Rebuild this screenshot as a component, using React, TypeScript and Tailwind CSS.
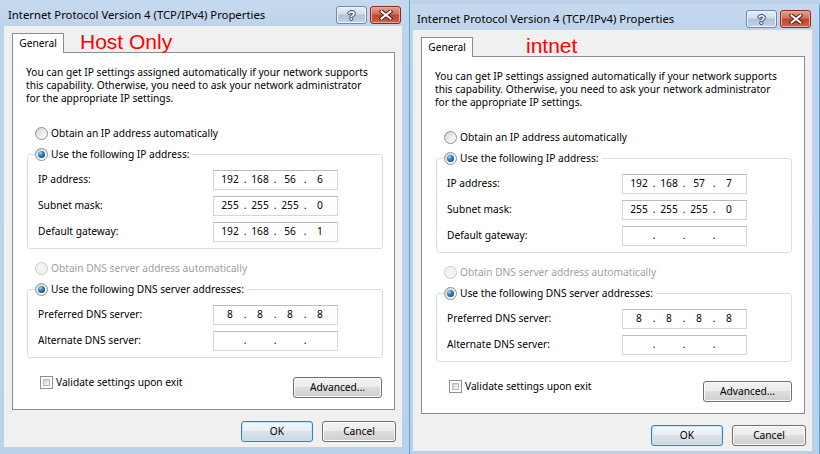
import React from "react";

type DlgProps = {
  frameLeft: "l4" | "l3";
  label: string;
  labelLeft: "host" | "int";
  ip: string[];
  mask: string[];
  gw: string[];
  dns1: string[];
  dns2: string[];
};

function Radio({ checked = false, disabled = false }: { checked?: boolean; disabled?: boolean }) {
  return (
    <span
      className={
        disabled
          ? "flex items-center justify-center w-[13px] h-[13px] shrink-0 rounded-full border border-[#c9c9c9] bg-[#f3f3f3]"
          : "flex items-center justify-center w-[13px] h-[13px] shrink-0 rounded-full border border-[#8e8f8f] bg-[linear-gradient(135deg,#cfd2d6_0%,#f7f7f7_70%,#ffffff_100%)]"
      }
    >
      {checked && (
        <span className="block w-[7px] h-[7px] rounded-full bg-[radial-gradient(circle_at_35%_30%,#9fd8f5_0%,#2a7fc0_40%,#0b3c6e_100%)]" />
      )}
    </span>
  );
}

function Checkbox() {
  return (
    <span className="flex w-[13px] h-[13px] shrink-0 border border-[#8e8f8f] bg-white p-[2px]">
      <span className="block w-full h-full border border-[#b4b9bf] bg-[linear-gradient(135deg,#c9cdd2_0%,#e8eaec_60%,#f6f6f6_100%)]" />
    </span>
  );
}

function IpBox({ parts }: { parts: string[] }) {
  return (
    <div className="flex items-center w-[125px] h-[20px] shrink-0 border border-[#d3d7dc] border-t-[#b8bcc2] bg-white pl-[5px]">
      {parts.map((p, i) => (
        <React.Fragment key={i}>
          {i > 0 && <span className="w-[8px] text-center">.</span>}
          <span className="w-[22px] text-center">{p}</span>
        </React.Fragment>
      ))}
    </div>
  );
}

function Row({ label, parts }: { label: string; parts: string[] }) {
  return (
    <div className="flex items-center h-[20px]">
      <span className="w-[175px] shrink-0">{label}</span>
      <IpBox parts={parts} />
    </div>
  );
}

function Btn({ children, def = false, w }: { children: React.ReactNode; def?: boolean; w: "ok" | "cancel" | "adv" }) {
  const width = w === "ok" ? "w-[72px]" : w === "cancel" ? "w-[74px]" : "w-[89px]";
  return (
    <div
      className={
        (def
          ? "border-[#3c7fb1] shadow-[inset_0_0_0_1px_#c4e5f6] bg-[linear-gradient(#f2f7fa_0%,#e8eff4_50%,#d9e3ea_50%,#ccd7df_100%)] "
          : "border-[#707070] shadow-[inset_0_0_0_1px_#fbfbfb] bg-[linear-gradient(#f2f2f2_0%,#ebebeb_50%,#dddddd_50%,#cfcfcf_100%)] ") +
        "flex items-center justify-center h-[21px] rounded-[3px] border text-black " +
        width
      }
    >
      {children}
    </div>
  );
}

function HelpBtn() {
  return (
    <div className="flex items-center justify-center w-[31px] h-[18px] rounded-[3px] border border-[#6f87a8] bg-[linear-gradient(#e8f0f8_0%,#cddcec_45%,#aec3da_50%,#c2d4e8_100%)] shadow-[inset_0_0_0_1px_#eef4fa]">
      <span className="[font-family:'Liberation_Sans',sans-serif] text-[13px] font-bold leading-none text-white [text-shadow:0_0_1px_#203650,0_0_1px_#203650,1px_0_0_#3a5272,-1px_0_0_#3a5272,0_1px_0_#3a5272,0_-1px_0_#3a5272]">
        ?
      </span>
    </div>
  );
}

function CloseBtn() {
  return (
    <div className="flex items-center justify-center w-[31px] h-[18px] rounded-[3px] border border-[#7e2a20] bg-[linear-gradient(#e3a294_0%,#d46d58_45%,#c0422c_50%,#d2624a_100%)] shadow-[inset_0_0_0_1px_#eca99b]">
      <svg width="14" height="10" viewBox="0 0 14 10">
        <path d="M2.5 1.5 L11.5 8.5 M11.5 1.5 L2.5 8.5" stroke="#4a1610" strokeWidth="4" strokeLinecap="square" />
        <path d="M2.5 1.5 L11.5 8.5 M11.5 1.5 L2.5 8.5" stroke="#ffffff" strokeWidth="2" strokeLinecap="square" />
      </svg>
    </div>
  );
}

function Dialog(p: DlgProps) {
  return (
    <div
      className={
        (p.frameLeft === "l4" ? "pl-[4px] " : "pl-[3px] ") +
        "flex flex-col w-[410px] h-[454px] shrink-0 pr-[7px] pb-[7px] border-r border-[#4ba8df] bg-[linear-gradient(#c5d9ee_0px,#bfd4eb_26px,#bad1ea_100%)]"
      }
    >
      <div className="flex items-start h-[26px] shrink-0">
        <span className="ml-[4px] mt-[7px] text-[11.3px] leading-[15px] whitespace-nowrap text-black">
          Internet Protocol Version 4 (TCP/IPv4) Properties
        </span>
        <div className="ml-auto mr-[1px] mt-[6px] flex gap-[3px]">
          <HelpBtn />
          <CloseBtn />
        </div>
      </div>
      <div className="relative flex flex-col flex-1 bg-[#f0f0f0]">
        <span
          className={
            (p.labelLeft === "host" ? "left-[76px] " : "left-[113px] ") +
            "absolute top-[5px] [font-family:'Liberation_Sans',Arial,sans-serif] text-[21px] leading-[21px] text-[#ff0000] whitespace-nowrap"
          }
        >
          {p.label}
        </span>
        <div className="flex mt-[7px] ml-[8px]">
          <div className="relative z-10 -mb-px flex items-center justify-center w-[52px] h-[20px] border border-b-0 border-[#898c95] bg-white">
            General
          </div>
        </div>
        <div className="flex flex-col ml-[8px] mr-[7px] h-[358px] border border-[#898c95] bg-white pl-[13px]">
          <div className="mt-[13px] leading-[13px] whitespace-nowrap">
            You can get IP settings assigned automatically if your network supports
            <br />
            this capability. Otherwise, you need to ask your network administrator
            <br />
            for the appropriate IP settings.
          </div>
          <div className="flex items-center gap-[3px] mt-[22px] ml-[9px] h-[13px]">
            <Radio />
            <span>Obtain an IP address automatically</span>
          </div>
          <fieldset className="mt-[8px] ml-[1px] w-[356px] border border-[#d5dfe5] rounded-[3px] pl-[10px] pt-[9px] pb-[6px]">
            <legend className="ml-[-3px] pr-[3px] flex items-center gap-[3px] h-[13px]">
              <Radio checked />
              <span>Use the following IP address:</span>
            </legend>
            <div className="flex flex-col gap-[6px]">
              <Row label="IP address:" parts={p.ip} />
              <Row label="Subnet mask:" parts={p.mask} />
              <Row label="Default gateway:" parts={p.gw} />
            </div>
          </fieldset>
          <div className="flex items-center gap-[3px] mt-[13px] ml-[9px] h-[13px] text-[#a0a0a0]">
            <Radio disabled />
            <span>Obtain DNS server address automatically</span>
          </div>
          <fieldset className="mt-[8px] ml-[1px] w-[356px] border border-[#d5dfe5] rounded-[3px] pl-[10px] pt-[9px] pb-[6px]">
            <legend className="ml-[-3px] pr-[3px] flex items-center gap-[3px] h-[13px]">
              <Radio checked />
              <span>Use the following DNS server addresses:</span>
            </legend>
            <div className="flex flex-col gap-[6px]">
              <Row label="Preferred DNS server:" parts={p.dns1} />
              <Row label="Alternate DNS server:" parts={p.dns2} />
            </div>
          </fieldset>
          <div className="flex items-start mt-[18px] mr-[12px]">
            <div className="flex items-center gap-[3px] ml-[14px] h-[13px]">
              <Checkbox />
              <span>Validate settings upon exit</span>
            </div>
            <div className="ml-auto mt-[1px]">
              <Btn w="adv">Advanced...</Btn>
            </div>
          </div>
        </div>
        <div className="flex justify-end gap-[9px] mt-[11px] mr-[6px]">
          <Btn def w="ok">
            OK
          </Btn>
          <Btn w="cancel">Cancel</Btn>
        </div>
      </div>
    </div>
  );
}

export default function App() {
  return (
    <div className="flex w-[820px] h-[454px] overflow-hidden bg-[#bcd2ea] [font-family:'Noto_Sans','Open_Sans',sans-serif] text-[10.2px] text-black">
      <Dialog
        frameLeft="l4"
        label="Host Only"
        labelLeft="host"
        ip={["192", "168", "56", "6"]}
        mask={["255", "255", "255", "0"]}
        gw={["192", "168", "56", "1"]}
        dns1={["8", "8", "8", "8"]}
        dns2={["", "", "", ""]}
      />
      <div className="mt-[4px]">
        <Dialog
          frameLeft="l3"
          label="intnet"
          labelLeft="int"
          ip={["192", "168", "57", "7"]}
          mask={["255", "255", "255", "0"]}
          gw={["", "", "", ""]}
          dns1={["8", "8", "8", "8"]}
          dns2={["", "", "", ""]}
        />
      </div>
    </div>
  );
}
